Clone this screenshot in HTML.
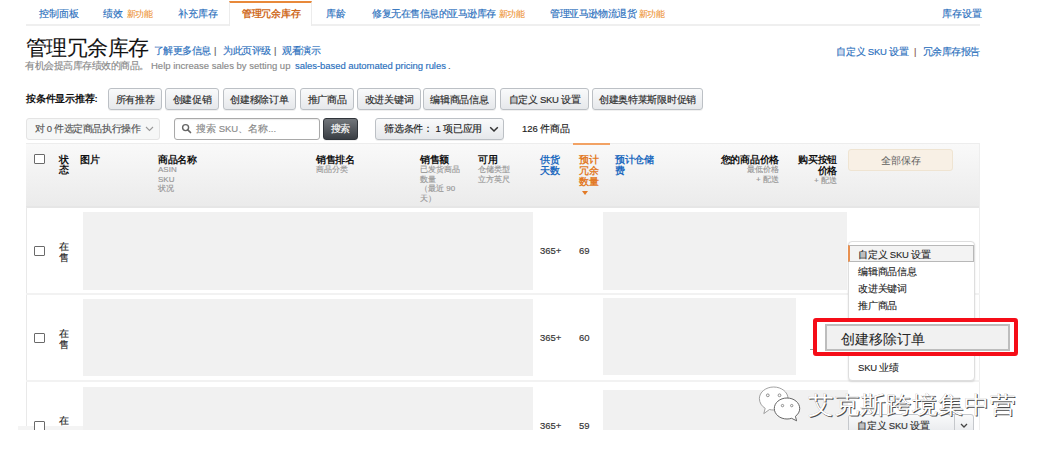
<!DOCTYPE html>
<html><head><meta charset="utf-8">
<style>
*{margin:0;padding:0;box-sizing:border-box}
html,body{width:1048px;height:452px;overflow:hidden;background:#fff}
body{position:relative;font-family:"Liberation Sans",sans-serif;color:#111;font-size:9.5px;line-height:1;-webkit-text-stroke:0.15px}
.a{position:absolute;white-space:nowrap}
.blue{color:#2a6fbd}
.new{-webkit-text-stroke:0.1px;position:absolute;color:#ee9436;font-size:8.5px;letter-spacing:-0.6px;white-space:nowrap}
.btn{position:absolute;top:88px;height:22px;border:1px solid #bcc0c5;border-radius:3px;background:linear-gradient(#f9fafb,#e6e8eb);text-align:center;line-height:21px;font-size:9.5px;color:#2a2a2a;letter-spacing:-0.3px;white-space:nowrap;box-shadow:0 1px 0 rgba(0,0,0,.06)}
.gray{position:absolute;background:#f1f1f1}
.hsub{color:#979797;font-size:8px;line-height:9.5px}
.hb{-webkit-text-stroke:0;font-weight:bold;font-size:9.5px;line-height:10.6px;color:#111;letter-spacing:-0.3px}
.mi{-webkit-text-stroke:0.1px;position:absolute;left:858px;font-size:9.5px;color:#222;white-space:nowrap;letter-spacing:-0.2px}
.cb{position:absolute;width:11px;height:10px;border:1.5px solid #6a6a6a;border-radius:1px;background:#fff}
.sep{position:absolute;color:#666}
</style></head><body>

<!-- tabs -->
<div class="a" style="left:26px;top:24px;width:954px;height:2px;background:#efefef"></div>
<div class="a" style="left:229px;top:1px;width:83px;height:25px;background:#fff;border-left:1px solid #ececec;border-right:1px solid #ececec;border-top:2px solid #e8893a"></div>
<div class="a blue" style="left:39px;top:9px">控制面板</div>
<div class="a blue" style="left:103px;top:9px">绩效</div><div class="new" style="left:127px;top:10px">新功能</div>
<div class="a blue" style="left:178px;top:9px">补充库存</div>
<div class="a" style="left:242px;top:9px;color:#cf6a22;-webkit-text-stroke:0;font-weight:bold;letter-spacing:-0.3px">管理冗余库存</div>
<div class="a blue" style="left:326px;top:9px">库龄</div>
<div class="a blue" style="left:372px;top:9px;letter-spacing:-0.5px">修复无在售信息的亚马逊库存</div><div class="new" style="left:499px;top:10px">新功能</div>
<div class="a blue" style="left:550px;top:9px;letter-spacing:-0.4px">管理亚马逊物流退货</div><div class="new" style="left:639px;top:10px">新功能</div>
<div class="a blue" style="left:942px;top:9px">库存设置</div>

<!-- title -->
<div class="a" style="left:26px;top:37.5px;font-size:20.5px;letter-spacing:-0.6px;-webkit-text-stroke:0.1px;color:#111">管理冗余库存</div>
<div class="a blue" style="left:154px;top:46px;letter-spacing:-0.6px">了解更多信息</div>
<div class="sep" style="left:214px;top:46px">|</div>
<div class="a blue" style="left:223px;top:46px;letter-spacing:-0.5px">为此页评级</div>
<div class="sep" style="left:274px;top:46px">|</div>
<div class="a blue" style="left:282px;top:46px;letter-spacing:-0.3px">观看演示</div>
<div class="a" style="left:25px;top:61px;color:#8a8a8a;letter-spacing:-0.5px">有机会提高库存绩效的商品。</div>
<div class="a" style="left:151px;top:61px;color:#8a8a8a">Help increase sales by setting up</div>
<div class="a blue" style="left:295px;top:61px;letter-spacing:-0.05px">sales-based automated pricing rules</div>
<div class="a" style="left:448px;top:61px;color:#555">.</div>
<div class="a blue" style="left:836px;top:47px;letter-spacing:-0.2px">自定义 SKU 设置</div>
<div class="sep" style="left:914px;top:47px;color:#8a5a4a">|</div>
<div class="a blue" style="left:923px;top:47px;letter-spacing:-0.55px">冗余库存报告</div>

<!-- buttons -->
<div class="a" style="left:26px;top:94px;-webkit-text-stroke:0;font-weight:bold;color:#111;letter-spacing:-0.2px">按条件显示推荐:</div>
<div class="btn" style="left:108px;width:54px">所有推荐</div>
<div class="btn" style="left:165px;width:54px">创建促销</div>
<div class="btn" style="left:223px;width:73px">创建移除订单</div>
<div class="btn" style="left:300px;width:54px">推广商品</div>
<div class="btn" style="left:357px;width:64px">改进关键词</div>
<div class="btn" style="left:423px;width:73px">编辑商品信息</div>
<div class="btn" style="left:500px;width:89px">自定义 SKU 设置</div>
<div class="btn" style="left:592px;width:111px">创建奥特莱斯限时促销</div>

<!-- search row -->
<div class="a" style="left:26px;top:118px;width:134px;height:22px;background:#f6f7f7;border:1px solid #e4e4e4;border-radius:3px"></div>
<div class="a" style="left:35px;top:124px;color:#555;font-size:9.5px;letter-spacing:-0.4px">对 0 件选定商品执行操作</div>
<svg class="a" style="left:145px;top:126px" width="9" height="6" viewBox="0 0 9 6"><path d="M1 1 L4.5 4.5 L8 1" fill="none" stroke="#999" stroke-width="1.1"/></svg>
<div class="a" style="left:174px;top:118px;width:146px;height:22px;background:#fff;border:1px solid #a9a9a9;border-radius:3px;box-shadow:inset 0 1px 1px rgba(0,0,0,.08)"></div>
<svg class="a" style="left:181px;top:123px" width="11" height="11" viewBox="0 0 11 11"><circle cx="4.6" cy="4.6" r="3" fill="none" stroke="#666" stroke-width="1.4"/><path d="M6.8 6.8 L9.5 9.5" stroke="#666" stroke-width="1.7" stroke-linecap="round"/></svg>
<div class="a" style="left:196px;top:124px;color:#8a8a8a">搜索 SKU、名称...</div>
<div class="btn" style="left:323px;top:118px;width:35px;background:linear-gradient(#72767b,#3a3e44);border-color:#30343a;color:#fff;line-height:20px">搜索</div>
<div class="btn" style="left:375px;top:118px;width:129px"></div>
<div class="a" style="left:384px;top:124px;color:#222;letter-spacing:-0.2px">筛选条件： 1 项已应用</div>
<svg class="a" style="left:489px;top:126px" width="10" height="7" viewBox="0 0 10 7"><path d="M1.2 1.2 L5 5 L8.8 1.2" fill="none" stroke="#333" stroke-width="1.5"/></svg>
<div class="a" style="left:522px;top:124px;color:#222">126 件商品</div>

<!-- header -->
<div class="a" style="left:26px;top:143px;width:954px;height:65px;background:linear-gradient(#f9f9f9,#ebebeb);border-top:1px solid #ededed;border-bottom:2px solid #e6e6e6"></div>
<div class="a" style="left:573px;top:143px;width:37px;height:2px;background:#f2a264"></div>
<div class="cb" style="left:34px;top:154px"></div>
<div class="a hb" style="left:59px;top:154.5px;line-height:10.8px">状<br>态</div>
<div class="a hb" style="left:80px;top:155px">图片</div>
<div class="a" style="left:158px;top:155px"><div class="hb" style="line-height:10px">商品名称</div><div class="hsub">ASIN<br>SKU<br>状况</div></div>
<div class="a" style="left:316px;top:155px"><div class="hb" style="line-height:10px">销售排名</div><div class="hsub">商品分类</div></div>
<div class="a" style="left:420px;top:155px"><div class="hb" style="line-height:10px">销售额</div><div class="hsub">已发货商品<br>数量<br>（最近 90<br>天）</div></div>
<div class="a" style="left:478px;top:155px"><div class="hb" style="line-height:10px">可用</div><div class="hsub">仓储类型<br>立方英尺</div></div>
<div class="a hb" style="left:540px;top:155px;color:#1f6bbf">供货<br>天数</div>
<div class="a hb" style="left:579px;top:155px;color:#e27a26;line-height:10.9px">预计<br>冗余<br>数量</div>
<div class="a" style="left:582px;top:191px;width:0;height:0;border-left:3.5px solid transparent;border-right:3.5px solid transparent;border-top:4px solid #e27a26"></div>
<div class="a hb" style="left:615px;top:155px;color:#1f6bbf">预计仓储<br>费</div>
<div class="a" style="left:700px;top:155px;width:79px;text-align:right"><div class="hb" style="line-height:10px">您的商品价格</div><div class="hsub">最低价格<br>+ 配送</div></div>
<div class="a" style="left:790px;top:155px;width:47px;text-align:right;white-space:normal"><div class="hb">购买按钮<br>价格</div><div class="hsub">+ 配送</div></div>
<div class="a" style="left:848px;top:149px;width:105px;height:22px;background:#f8f0e5;border:1px solid #efe4d2;border-radius:3px;text-align:center;line-height:21px;color:#606060;-webkit-text-stroke:0">全部保存</div>

<!-- table borders -->
<div class="a" style="left:26px;top:207px;width:1px;height:219px;background:#e9e9e9"></div>
<div class="a" style="left:979px;top:143px;width:1px;height:287px;background:#eeeeee"></div>
<div class="a" style="left:26px;top:293px;width:954px;height:2px;background:#f2f2f2"></div>
<div class="a" style="left:26px;top:380px;width:954px;height:2px;background:#f2f2f2"></div>

<!-- rows -->
<div class="gray" style="left:83px;top:212px;width:450px;height:78px"></div>
<div class="gray" style="left:603px;top:212px;width:244px;height:78px"></div>
<div class="gray" style="left:83px;top:299px;width:450px;height:77px"></div>
<div class="gray" style="left:603px;top:298px;width:193px;height:77px"></div>
<div class="gray" style="left:83px;top:387px;width:450px;height:43px"></div>
<div class="gray" style="left:603px;top:390px;width:245px;height:40px"></div>
<div class="a" style="left:18px;top:426px;width:65px;height:4px;background:#f4f4f4"></div>

<div class="cb" style="left:34px;top:246px"></div>
<div class="a" style="left:59px;top:241px;line-height:11px;color:#222">在<br>售</div>
<div class="a" style="left:540px;top:246px;color:#333">365+</div>
<div class="a" style="left:579px;top:246px;color:#333">69</div>

<div class="cb" style="left:34px;top:333px"></div>
<div class="a" style="left:59px;top:328px;line-height:11px;color:#222">在<br>售</div>
<div class="a" style="left:540px;top:333px;color:#333">365+</div>
<div class="a" style="left:579px;top:333px;color:#333">60</div>

<div class="a" style="left:0;top:400px;width:1048px;height:30px;overflow:hidden">
  <div class="cb" style="left:34px;top:21px"></div>
  <div class="a" style="left:59px;top:16px;color:#222">在</div>
  <div class="a" style="left:540px;top:21px;color:#333">365+</div>
  <div class="a" style="left:579px;top:21px;color:#333">59</div>
  <div class="a" style="left:848px;top:14px;width:126px;height:22px;background:linear-gradient(#f9fafb,#e6e8eb);border:1px solid #c5c8cc;border-radius:3px"></div>
  <div class="a" style="left:857px;top:21px;color:#333;letter-spacing:-0.2px">自定义 SKU 设置</div>
  <div class="a" style="left:954px;top:15px;width:1px;height:20px;background:#c5c8cc"></div>
  <svg class="a" style="left:960px;top:23px" width="8" height="6" viewBox="0 0 8 6"><path d="M1 1 L4 4 L7 1" fill="none" stroke="#444" stroke-width="1.3"/></svg>
</div>

<!-- dropdown menu -->
<div class="a" style="left:848px;top:241px;width:127px;height:140px;background:#fff;border:1px solid #dedede;border-radius:4px;box-shadow:0 1px 2px rgba(0,0,0,.12)"></div>
<div class="a" style="left:848px;top:245px;width:126px;height:17px;background:#f3f3f3;border:1px solid #b8b8b8;border-left:2px solid #e89050"></div>
<div class="mi" style="top:250px">自定义 SKU 设置</div>
<div class="mi" style="top:267px">编辑商品信息</div>
<div class="mi" style="top:284px">改进关键词</div>
<div class="mi" style="top:301px">推广商品</div>
<div class="mi" style="top:363px">SKU 业绩</div>

<div class="a" style="left:810px;top:349px;width:3px;height:1px;background:#9a9a9a"></div>
<!-- red highlight -->
<div class="a" style="left:813px;top:318px;width:205px;height:38px;border:4px solid #f50d18;border-radius:3px;background:#fff"></div>
<div class="a" style="left:825px;top:324px;width:185px;height:27px;background:#f1f1f1;border:2px solid #bdbdbd"></div>
<div class="a" style="left:841px;top:332px;font-size:14px;color:#262626;-webkit-text-stroke:0.05px">创建移除订单</div>

<!-- watermark -->
<svg class="a" style="left:756px;top:384px" width="48" height="40" viewBox="0 0 48 40">
  <path d="M17.7 3 C25.6 3 32 8.2 32 14.5 C32 20.8 25.6 26 17.7 26 C16.2 26 14.8 25.8 13.5 25.5 L7.8 29.6 L9.2 24.3 C5.6 22.2 3.4 18.6 3.4 14.5 C3.4 8.2 9.8 3 17.7 3 Z" fill="#fff" stroke="#8a8a8a" stroke-width="0.8"/>
  <path d="M31 14 C38 14 43.7 18.7 43.7 24.5 C43.7 27.6 42.1 30.4 39.4 32.3 L40.6 36.8 L35.6 34.3 C34.1 34.8 32.6 35 31 35 C24 35 18.3 30.3 18.3 24.5 C18.3 18.7 24 14 31 14 Z" fill="#fff" stroke="#555" stroke-width="0.9"/>
  <g fill="#fff" stroke="#666" stroke-width="0.7">
    <circle cx="11.8" cy="11.3" r="1.4"/><circle cx="23.5" cy="11.3" r="1.4"/>
    <circle cx="26.5" cy="21.6" r="1.2"/><circle cx="35.7" cy="21.6" r="1.2"/>
  </g>
</svg>
<div class="a" style="left:808px;top:393px;font-size:25.5px;transform:scaleY(0.94);transform-origin:0 0;font-weight:300;-webkit-text-stroke:0;color:#fff;text-shadow:1px 1px 0 #4a4a4a,0 0 0.6px #888">艾克斯跨境集中营</div>

</body></html>
